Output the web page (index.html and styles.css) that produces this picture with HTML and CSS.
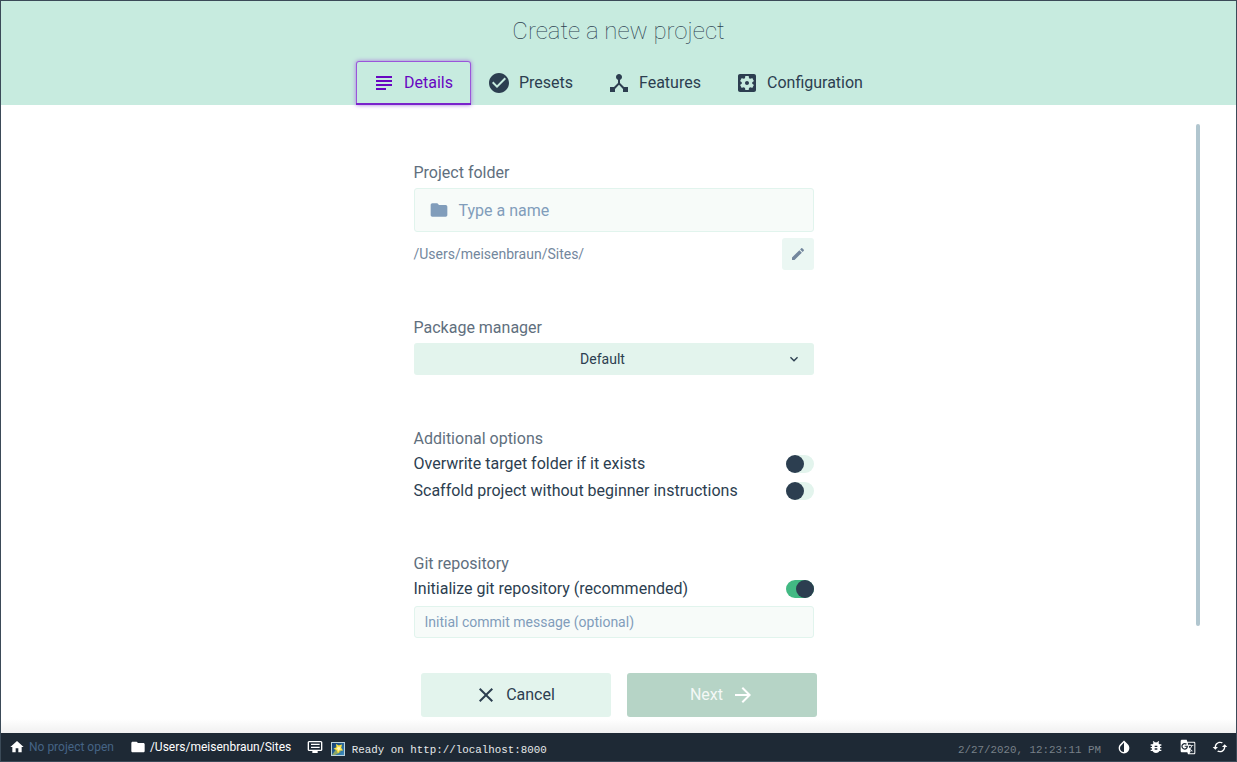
FILE: index.html
```html
<!DOCTYPE html>
<html lang="en">
<head>
<meta charset="utf-8">
<title>Create a new project</title>
<link rel="stylesheet" href="styles.css">
</head>
<body>
<div class="app">
  <header class="header">
    <h1 class="title">Create a new project</h1>
    <nav class="tabs">
      <a class="tab tab-details active"><svg class="icon" viewBox="0 0 24 24"><path d="M14 17H4v2h10v-2zm6-8H4v2h16V9zM4 15h16v-2H4v2zM4 5v2h16V5H4z"/></svg><span>Details</span></a>
      <a class="tab tab-presets"><svg class="icon" viewBox="0 0 24 24"><path d="M12 2C6.480 2 2 6.480 2 12s4.480 10 10 10 10-4.480 10-10S17.520 2 12 2zm-2 15l-5-5 1.410-1.410L10 14.170l7.590-7.590L19 8l-9 9z"/></svg><span>Presets</span></a>
      <a class="tab tab-features"><svg class="icon" viewBox="0 0 24 24"><path d="M17 16l-4-4V8.820C14.160 8.400 15 7.300 15 6c0-1.660-1.340-3-3-3S9 4.340 9 6c0 1.300.84 2.400 2 2.820V12l-4 4H3v5h5v-3.050l4-4.200 4 4.200V21h5v-5h-4z"/></svg><span>Features</span></a>
      <a class="tab tab-config"><svg class="icon" viewBox="0 0 24 24"><path d="M12 10c-1.100 0-2 .9-2 2s.9 2 2 2 2-.9 2-2-.9-2-2-2zm7-7H5c-1.110 0-2 .9-2 2v14c0 1.100.89 2 2 2h14c1.110 0 2-.9 2-2V5c0-1.100-.89-2-2-2zm-1.750 9c0 .23-.02.46-.05.68l1.480 1.160c.13.11.17.3.08.45l-1.400 2.420c-.09.15-.27.21-.43.15l-1.740-.7c-.36.28-.76.51-1.180.69l-.26 1.850c-.03.17-.18.3-.35.3h-2.800c-.17 0-.32-.13-.35-.29l-.26-1.850c-.43-.18-.82-.41-1.180-.69l-1.740.7c-.16.06-.34 0-.43-.15l-1.400-2.420c-.09-.15-.05-.34.08-.45l1.480-1.160c-.03-.23-.05-.46-.05-.69s.02-.46.05-.68l-1.480-1.160c-.13-.11-.17-.3-.08-.45l1.400-2.420c.09-.15.27-.21.43-.15l1.740.7c.36-.28.76-.51 1.180-.69l.26-1.850c.03-.17.18-.3.35-.3h2.800c.17 0 .32.13.35.29l.26 1.850c.43.18.82.41 1.180.69l1.740-.7c.16-.06.34 0 .43.15l1.400 2.420c.09.15.05.34-.08.45l-1.480 1.160c.03.23.05.46.05.69z"/></svg><span>Configuration</span></a>
    </nav>
  </header>
  <main class="content">
    <form class="form">
      <section class="field folder-field">
        <label class="label">Project folder</label>
        <div class="input input-big"><svg class="icon" viewBox="0 0 24 24"><path d="M10 4H4c-1.100 0-1.990.9-1.990 2L2 18c0 1.100.9 2 2 2h16c1.100 0 2-.9 2-2V8c0-1.100-.9-2-2-2h-8l-2-2z"/></svg><span>Type a name</span></div>
        <div class="path-row"><span class="text">/Users/meisenbraun/Sites/</span>
          <div class="edit"><svg class="icon" viewBox="0 0 24 24"><path d="M3 17.250V21h3.750L17.810 9.940l-3.750-3.750L3 17.250zM20.710 7.040c.39-.39.39-1.020 0-1.410l-2.340-2.340c-.39-.39-1.020-.39-1.410 0l-1.830 1.830 3.750 3.750 1.830-1.830z"/></svg></div>
        </div>
      </section>
      <section class="field manager-field">
        <label class="label">Package manager</label>
        <div class="select"><span>Default</span><svg class="icon" viewBox="0 0 24 24"><path d="M7.410 8.590L12 13.170l4.590-4.580L18 10l-6 6-6-6z"/></svg></div>
      </section>
      <section class="field options-field">
        <label class="label">Additional options</label>
        <div class="switch-row"><span class="text">Overwrite target folder if it exists</span><i class="switch"></i></div>
        <div class="switch-row"><span class="text">Scaffold project without beginner instructions</span><i class="switch"></i></div>
      </section>
      <section class="field">
        <label class="label">Git repository</label>
        <div class="switch-row"><span class="text">Initialize git repository (recommended)</span><i class="switch on"></i></div>
        <div class="input input-small"><span>Initial commit message (optional)</span></div>
      </section>
    </form>
    <div class="scrollbar"></div>
  </main>
  <div class="actions">
    <div class="button cancel"><svg class="icon" viewBox="0 0 24 24"><path d="M19 6.410L17.590 5 12 10.590 6.410 5 5 6.410 10.590 12 5 17.590 6.410 19 12 13.410 17.590 19 19 17.590 13.410 12z"/></svg><span>Cancel</span></div>
    <div class="button next"><span>Next</span><svg class="icon" viewBox="0 0 24 24"><path d="M12 4l-1.410 1.410L16.170 11H4v2h12.170l-5.580 5.590L12 20l8-8z"/></svg></div>
  </div>
  <footer class="status">
    <div class="status-item project"><svg class="icon" viewBox="0 0 24 24"><path d="M10 20v-6h4v6h5v-8h3L12 3 2 12h3v8z"/></svg><span>No project open</span></div>
    <div class="status-item cwd"><svg class="icon" viewBox="0 0 24 24"><path d="M10 4H4c-1.100 0-1.990.9-1.990 2L2 18c0 1.100.9 2 2 2h16c1.100 0 2-.9 2-2V8c0-1.100-.9-2-2-2h-8l-2-2z"/></svg><span>/Users/meisenbraun/Sites</span></div>
    <div class="status-item log"><svg class="icon" viewBox="0 0 24 24"><path d="M20 3H4c-1.650 0-3 .9-3 2v11c0 1.100 1.350 2 3 2h4v3h8v-3h4c1.650 0 3-.9 3-2V5c0-1.100-1.350-2-3-2zm1 13H3V5h18v11zM6 7h13v2H6zM6 11.500h13v2H6z"/></svg>
      <svg class="emoji" viewBox="0 0 14 14"><defs><linearGradient id="sky" x2="1" y2="1"><stop offset="0" stop-color="#123c70"/><stop offset="1" stop-color="#3f8fc0"/></linearGradient></defs><path fill="#bcd3dc" d="M0 0h14v14H0z"/><path fill="url(#sky)" d="M1 1h12v12H1z"/><path fill="#8fa866" d="M1 13l5-7 4 4-6 3z"/><path fill="#ffe43f" d="M5 2l2.800 1.600L11 2.500l-.8 3.300L12 8.500l-3.300.2L7 11.500 5.800 8.300 2.500 6.800l3-1.500z"/><path fill="#fff9bd" d="M6.500 4.500l1.500.8 1.500-.3-.5 1.500.7 1.300-1.500-.1-1 1.200-.5-1.600-1.500-.8 1.300-.5z"/></svg>
      <span class="mono">Ready on http://localhost:8000</span></div>
    <span class="mono date">2/27/2020, 12:23:11 PM</span>
    <div class="tools">
      <svg class="icon" viewBox="0 0 24 24"><path d="M17.660 8L12 2.350 6.340 8C4.780 9.560 4 11.640 4 13.640s.78 4.110 2.340 5.670 3.610 2.350 5.660 2.350 4.100-.79 5.660-2.350S20 15.640 20 13.640 19.220 9.560 17.660 8zM6 14c.01-2 .62-3.270 1.760-4.400L12 5.270v14.400c-3.500 0-6-2.270-6-5.670z" transform="matrix(-1 0 0 1 24 0) rotate(0)" class="flip"/></svg>
      <svg class="icon" viewBox="0 0 24 24"><path d="M20 8h-2.810c-.45-.78-1.070-1.450-1.820-1.960L17 4.410 15.590 3l-2.170 2.170C12.960 5.060 12.490 5 12 5s-.96.06-1.410.17L8.410 3 7 4.410l1.620 1.630C7.880 6.550 7.260 7.220 6.810 8H4v2h2.090c-.05.33-.09.66-.09 1v1H4v2h2v1c0 .34.04.67.09 1H4v2h2.810c1.040 1.790 2.970 3 5.190 3s4.150-1.210 5.190-3H20v-2h-2.090c.05-.33.09-.66.09-1v-1h2v-2h-2v-1c0-.34-.04-.67-.09-1H20V8zm-6 8h-4v-2h4v2zm0-4h-4v-2h4v2z"/></svg>
      <svg class="icon" viewBox="0 0 24 24"><path d="M21 4H11l-1-3H3c-1.100 0-2 .9-2 2v15c0 1.100.9 2 2 2h8l1 3h9c1.100 0 2-.9 2-2V6c0-1.100-.9-2-2-2zM7 16c-2.760 0-5-2.240-5-5s2.240-5 5-5c1.350 0 2.480.5 3.350 1.300L9.030 8.570c-.38-.36-1.040-.78-2.030-.78-1.740 0-3.150 1.440-3.150 3.210S5.260 14.210 7 14.210c2.010 0 2.840-1.440 2.920-2.410H7v-1.710h4.680c.07.31.12.61.12 1.020C11.800 13.970 9.890 16 7 16zm6.170-5.420h3.700c-.43 1.250-1.110 2.430-2.050 3.470-.31-.35-.6-.72-.86-1.100l-.79-2.370zm8.330 9.920c0 .55-.45 1-1 1H14l2-2.500-1.040-3.100 3.100 3.100.92-.92-3.300-3.250.02-.02c1.130-1.250 1.930-2.690 2.400-4.220H20v-1.300h-4.530V8h-1.290v1.290h-1.440L11.460 5.500h9.040c.55 0 1 .45 1 1v14z"/></svg>
      <svg class="icon" viewBox="0 0 24 24"><path d="M19 8l-4 4h3c0 3.310-2.690 6-6 6-1.010 0-1.970-.25-2.800-.7l-1.460 1.460C8.970 19.540 10.430 20 12 20c4.420 0 8-3.580 8-8h3l-4-4zM6 12c0-3.310 2.690-6 6-6 1.010 0 1.970.25 2.800.7l1.460-1.460C15.030 4.460 13.570 4 12 4c-4.420 0-8 3.580-8 8H1l4 4 4-4H6z"/></svg>
    </div>
  </footer>
</div>
</body>
</html>
```
FILE: styles.css
```css
* { box-sizing: border-box; }
body { margin: 0; font: 16px/22px Roboto, "Open Sans", sans-serif; color: #2c3e50; }
.app { width: 1237px; height: 762px; border: 1px solid #3b4a58; display: flex; flex-direction: column; background: #fff; overflow: hidden; }
.icon { display: block; width: 24px; height: 24px; fill: currentColor; flex: none; }
.flip { transform: none; }
.header { height: 104px; flex: none; background: #c7ebdf; display: flex; flex-direction: column; justify-content: space-between; align-items: center; }
.title { margin: 14px 0 0; font-size: 24px; line-height: 32px; font-weight: 100; }
.tabs { display: flex; height: 44px; }
.tab { display: flex; align-items: center; gap: 8px; padding-left: 16px; border-radius: 3px 3px 0 0; }
.tab-details { width: 115px; }
.tab-presets { width: 120px; }
.tab-features { width: 128px; }
.tab-config { width: 162px; }
.tab.active { color: #6806c1; border-radius: 3px 3px 0 0; box-shadow: inset 0 -2px 0 #7a22cb, inset 0 0 0 1px #9a55da, 0 0 4px #a673dc; }
.content { flex: 1; min-height: 0; display: flex; justify-content: space-between; padding: 19px 36px 0 413px; }
.scrollbar { width: 4px; height: 502px; border-radius: 2px; background: #b1c6cf; }
.form { width: 400px; padding-top: 38px; }
.label { display: block; margin-left: -0.5px; color: #5f6f7e; line-height: 22px; }
.text { margin-left: -0.5px; }
.folder-field { height: 155px; }
.manager-field { height: 111px; }
.options-field { height: 125px; }
.input { display: flex; align-items: center; background: #f7fbf9; border: 1px solid #e1f4ed; border-radius: 3px; color: #819dbb; }
.input-big { height: 44px; margin-top: 4px; padding-left: 14px; gap: 9.5px; }
.input-big span { padding-top: 2px; }
.input-big .icon { width: 20px; height: 20px; }
.input-small { height: 32px; margin-top: 4px; padding-left: 9.5px; font-size: 14px; }
.path-row { display: flex; justify-content: space-between; align-items: center; margin-top: 6px; height: 32px; font-size: 14px; color: #73879d; }
.edit { width: 32px; height: 32px; border-radius: 3px; background: #ebf7f3; display: grid; place-items: center; }
.edit .icon { width: 16px; height: 16px; }
.select { height: 32px; margin-top: 4px; padding: 0 12px 0 5px; background: #e3f4ed; border-radius: 3px; display: flex; align-items: center; font-size: 14px; }
.select span { flex: 1; text-align: center; }
.select .icon { width: 16px; height: 16px; }
.switch-row { display: flex; justify-content: space-between; align-items: center; height: 27px; }
.switch { width: 28px; height: 18px; border-radius: 9px; background: #e3f4ed; display: flex; }
.switch::before { content: ""; width: 18px; height: 18px; border-radius: 50%; background: #2c3e50; }
.switch.on { background: #42b983; justify-content: flex-end; }
.actions { height: 76px; flex: none; display: flex; justify-content: center; gap: 16px; padding-top: 16px; background: linear-gradient(to bottom, #fff 62px, #f0f0f0 76px); }
.button { width: 190px; height: 44px; border-radius: 3px; display: flex; align-items: center; justify-content: center; gap: 8px; }
.cancel { background: #e3f4ed; padding-right: 2px; }
.next { background: #b6d4c6; color: #fff; padding-left: 2px; }
.next span { opacity: .85; }
.status { height: 28px; flex: none; display: flex; align-items: center; background: #1e2935; color: #fff; font-size: 12px; padding: 0 8px; }
.status .icon { width: 16px; height: 16px; }
.status-item { display: flex; align-items: center; gap: 4px; }
.status-item > span:not(.mono) { margin-top: -1px; }
.project span { color: #456485; }
.cwd { margin-left: 16px; }
.log { margin-left: 16px; gap: 8px; }
.log .emoji { width: 14px; height: 14px; margin-top: 4px; }
.log .mono { margin-left: -1.5px; }
.mono { font-family: "Liberation Mono", monospace; font-size: 10.83px; padding-top: 5px; color: #e5e8ea; }
.date { margin-left: auto; color: #788088; }
.tools { display: flex; gap: 16px; margin-left: 15px; }
```
